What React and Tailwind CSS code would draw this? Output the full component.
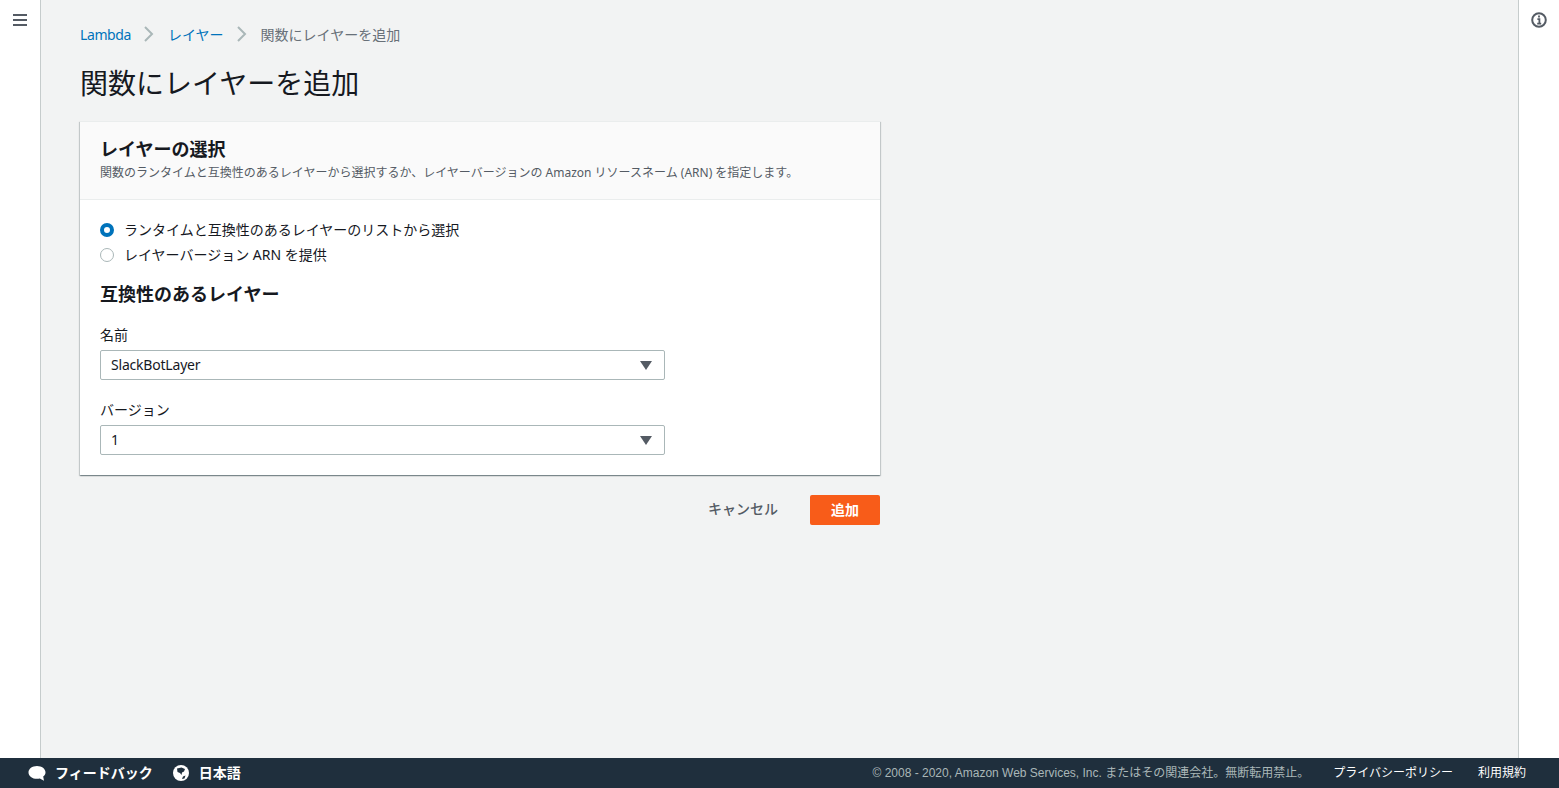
const Caret = () => (
  <svg width="12" height="9" viewBox="0 0 12 9" className="shrink-0">
    <path d="M0 0h12L6 9z" fill="#545b64" />
  </svg>
)

const Crumb = () => (
  <svg width="10" height="16" viewBox="0 0 10 16" fill="none" className="ml-[13px] mr-[14px]">
    <path d="M1 1l7 7-7 7" stroke="#aab7b8" strokeWidth="2" />
  </svg>
)

const SelectBox = ({ value }) => (
  <div className="flex items-center justify-between h-[30px] w-[565px] pl-[10px] pr-[12px] bg-white border border-[#aab7b8] rounded-[2px] text-[14px] text-[#16191f]">
    <span className="pb-[2px] tracking-[-0.2px]">{value}</span>
    <Caret />
  </div>
)

const Radio = ({ checked, label }) => (
  <div className="flex items-center h-[25px] gap-[10px]">
    {checked ? (
      <span className="w-[14px] h-[14px] rounded-full bg-white border-[4px] border-[#0073bb]" />
    ) : (
      <span className="w-[14px] h-[14px] rounded-full bg-white border border-[#aab7b8]" />
    )}
    <span className="text-[14px] text-[#16191f]">{label}</span>
  </div>
)

const App = () => {
  return (
    <div className="h-screen flex flex-col overflow-hidden bg-white font-['Noto_Sans','Noto_Sans_CJK_JP',sans-serif]">
      <div className="flex flex-1 min-h-0">
        <aside className="w-[41px] shrink-0 bg-white border-r border-[#c6cccc] pt-[14px] pl-[13px]">
          <svg width="14" height="12" viewBox="0 0 14 12">
            <path d="M0 1h14M0 6h14M0 11h14" stroke="#545b64" strokeWidth="2" />
          </svg>
        </aside>

        <main className="flex-1 bg-[#f2f3f3] pl-[39px] pt-[23px]">
          <nav className="flex items-center h-[22px] text-[14px]">
            <span className="tracking-[-0.4px] text-[#0073bb]">Lambda</span>
            <Crumb />
            <span className="text-[#0073bb]">レイヤー</span>
            <Crumb />
            <span className="text-[#687078]">関数にレイヤーを追加</span>
          </nav>
          <h1 className="mt-[16px] h-[44px] leading-[44px] text-[28px] font-normal text-[#16191f]">関数にレイヤーを追加</h1>

          <section className="mt-[16px] w-[800px] bg-white border-t border-[#eaeded] shadow-[0_1px_1px_0_rgba(0,28,36,0.3),1px_1px_1px_0_rgba(0,28,36,0.15),-1px_1px_1px_0_rgba(0,28,36,0.15)]">
            <div className="h-[78px] px-[20px] pt-[15px] bg-[#fafafa] border-b border-[#eaeded]">
              <h2 className="text-[18px] leading-[24px] font-bold text-[#16191f]">レイヤーの選択</h2>
              <p className="mt-[2px] text-[12px] leading-[20px] text-[#545b64]">
                関数のランタイムと互換性のあるレイヤーから選択するか、レイヤーバージョンの Amazon リソースネーム (ARN) を指定します。
              </p>
            </div>
            <div className="px-[20px] pt-[17px] pb-[20px]">
              <Radio checked label="ランタイムと互換性のあるレイヤーのリストから選択" />
              <Radio label="レイヤーバージョン ARN を提供" />
              <h3 className="mt-[15px] text-[18px] leading-[24px] font-bold text-[#16191f]">互換性のあるレイヤー</h3>
              <label className="block mt-[19px] mb-[5px] text-[14px] leading-[20px] text-[#16191f]">名前</label>
              <SelectBox value="SlackBotLayer" />
              <label className="block mt-[20px] mb-[5px] text-[14px] leading-[20px] text-[#16191f]">バージョン</label>
              <SelectBox value="1" />
            </div>
          </section>

          <div className="mt-[20px] w-[800px] flex items-center justify-end gap-[32px]">
            <button className="pb-[4px] text-[14px] font-medium text-[#545b64]">キャンセル</button>
            <button className="w-[70px] h-[30px] pb-[2px] bg-[#f85c19] rounded-[2px] text-[14px] font-bold text-white">追加</button>
          </div>
        </main>

        <aside className="w-[41px] shrink-0 bg-white border-l border-[#c6cccc] pt-[12px] pl-[12px]">
          <svg width="16" height="16" viewBox="0 0 16 16" fill="none">
            <circle cx="8" cy="8" r="6.8" stroke="#545b64" strokeWidth="2" />
            <path d="M8 3.600v2M6.400 7.200H8.400V11.400M6.200 11.600h4" stroke="#545b64" strokeWidth="1.800" />
          </svg>
        </aside>
      </div>

      <footer className="h-[30px] shrink-0 bg-[#1f2f3d] flex items-center pl-[28px] pr-[33px] text-[14px]">
        <svg width="18" height="17" viewBox="0 0 18 17" className="mr-[9px]">
          <path d="M9 1C4.200 1 .5 3.800.5 7.400c0 3.600 3.700 6.400 8.500 6.400 1 0 1.900-.1 2.800-.4L16 15.800l-.8-4.200c1.400-1.100 2.300-2.600 2.300-4.200C17.500 3.800 13.800 1 9 1z" fill="#fff" />
        </svg>
        <span className="pb-[2px] font-bold text-white">フィードバック</span>
        <svg width="16" height="16" viewBox="0 0 16 16" className="ml-[20px] mr-[10px]">
          <circle cx="8" cy="8" r="8" fill="#fff" />
          <path d="M4 3.500 8.500 2.500 12 4 11 6.500 9 7.500 8.500 10 7 8 4.500 7zM10 11.500 12.500 10.500 11.500 13.500 9 14z" fill="#1f2f3d" />
        </svg>
        <span className="pb-[2px] font-bold text-white">日本語</span>
        <span className="ml-auto font-['Liberation_Sans','Noto_Sans_CJK_JP',sans-serif] text-[12px] text-[#aab7b8]">
          © 2008 - 2020, Amazon Web Services, Inc. またはその関連会社。無断転用禁止。
        </span>
        <span className="ml-[24px] font-['Liberation_Sans','Noto_Sans_CJK_JP',sans-serif] text-[12px] text-white">プライバシーポリシー</span>
        <span className="ml-[25px] font-['Liberation_Sans','Noto_Sans_CJK_JP',sans-serif] text-[12px] text-white">利用規約</span>
      </footer>
    </div>
  )
}

export default App
